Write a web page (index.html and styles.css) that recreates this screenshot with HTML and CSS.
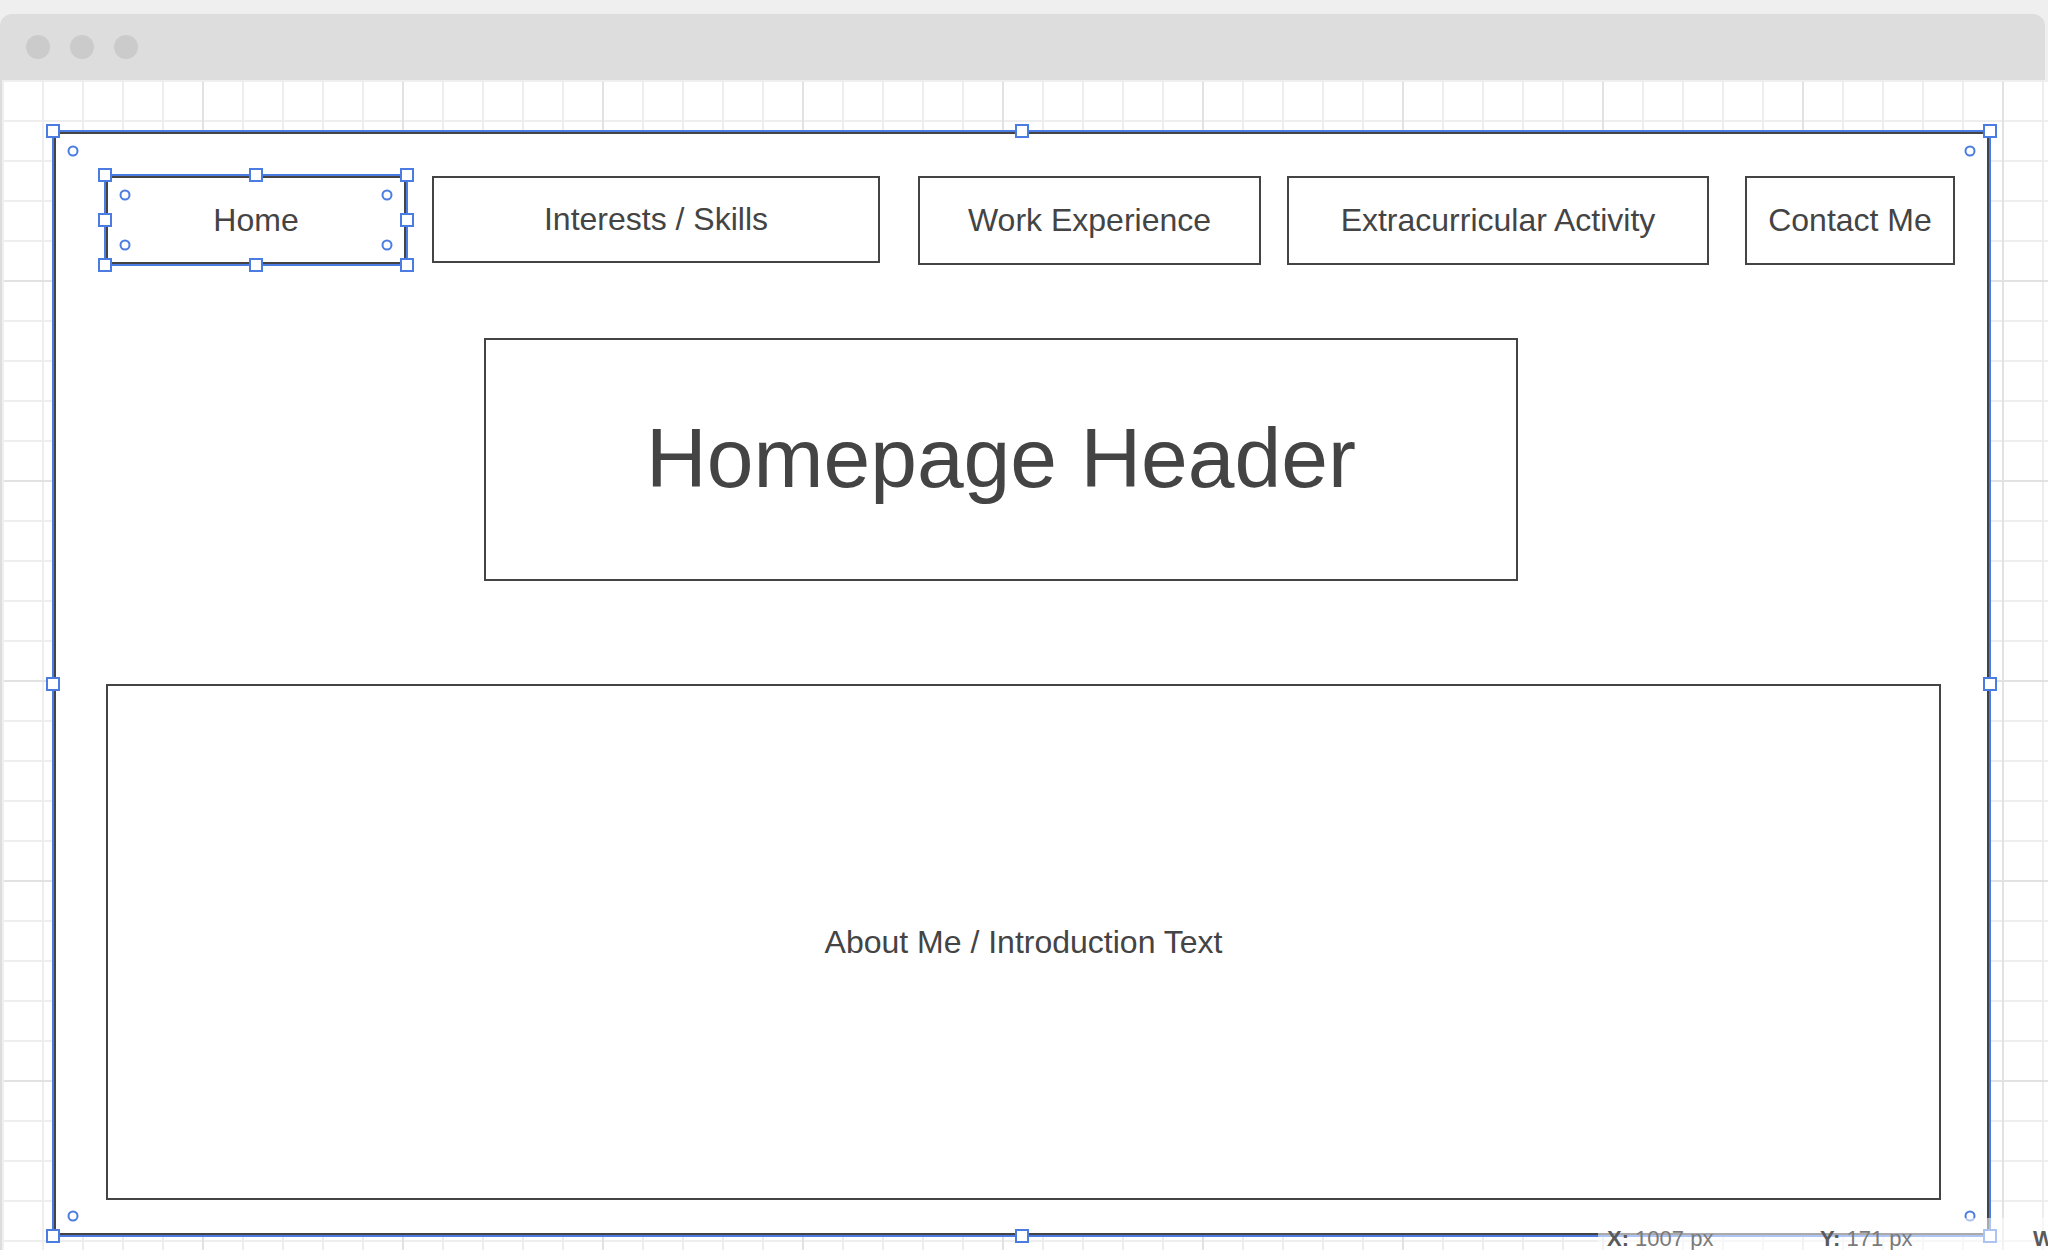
FILE: index.html
```html
<!DOCTYPE html>
<html lang="en">
<head>
<meta charset="utf-8">
<title>Wireframe</title>
<link rel="stylesheet" href="styles.css">
</head>
<body>
<div class="window">
  <div class="titlebar">
    <span class="dot"></span><span class="dot"></span><span class="dot"></span>
  </div>
  <div class="canvas">
    <div class="frame">
      <div class="sel">
        <span class="hd tl"></span><span class="hd tm"></span><span class="hd tr"></span>
        <span class="hd ml"></span><span class="hd mr"></span>
        <span class="hd bl"></span><span class="hd bm"></span><span class="hd br"></span>
        <span class="rc c-tl"></span><span class="rc c-tr"></span><span class="rc c-bl"></span><span class="rc c-br"></span>
      </div>
      <nav class="nav">
        <div class="navbox nb-home selected">Home
          <div class="sel">
            <span class="hd tl"></span><span class="hd tm"></span><span class="hd tr"></span>
            <span class="hd ml"></span><span class="hd mr"></span>
            <span class="hd bl"></span><span class="hd bm"></span><span class="hd br"></span>
            <span class="rc c-tl"></span><span class="rc c-tr"></span><span class="rc c-bl"></span><span class="rc c-br"></span>
          </div>
        </div>
        <div class="navbox nb-interests">Interests / Skills</div>
        <div class="navbox nb-work">Work Experience</div>
        <div class="navbox nb-extra">Extracurricular Activity</div>
        <div class="navbox nb-contact">Contact Me</div>
      </nav>
      <div class="header-box">Homepage Header</div>
      <div class="about-box">About Me / Introduction Text</div>
    </div>
  </div>
  <div class="status">
    <span class="stat"><b>X:</b> 1007 px</span>
    <span class="stat"><b>Y:</b> 171 px</span>
    <span class="stat"><b>W</b></span>
  </div>
</div>
</body>
</html>
```
FILE: styles.css
```css
* { box-sizing: border-box; }

html, body {
  margin: 0;
  padding: 0;
  height: 1250px;
  overflow: hidden;
  background: #efefef;
  font-family: "Liberation Sans", Arial, sans-serif;
}

.window {
  padding-top: 14px;
}

.titlebar {
  height: 66px;
  margin-right: 3px;
  background: #dddddd;
  border-radius: 12px 12px 0 0;
  display: flex;
  align-items: center;
  gap: 20px;
  padding-left: 26px;
}

.dot {
  width: 24px;
  height: 24px;
  border-radius: 50%;
  background: #cbcbcb;
}

.canvas {
  height: 1170px;
  border-left: 2px solid #dddddd;
  padding: 2px 0 0 2px;
  background-color: #ffffff;
  background-image:
    linear-gradient(to right, #e2e2e2 2px, transparent 2px),
    linear-gradient(to bottom, #e2e2e2 2px, transparent 2px),
    linear-gradient(to right, #eeeeee 2px, transparent 2px),
    linear-gradient(to bottom, #eeeeee 2px, transparent 2px);
  background-size: 200px 200px, 200px 200px, 40px 40px, 40px 40px;
  background-position: 0 0, 0 0, 0 0, 0 0;
  background-clip: content-box;
  overflow: hidden;
}

.frame {
  position: relative;
  width: 1935px;
  height: 1103px;
  margin: 50px 0 0 50px;
  background: #ffffff;
  border: 2px solid #444444;
  outline: 2px solid #4a7ce2;
}

/* selection overlay */
.sel {
  position: absolute;
  inset: -3px;
  pointer-events: none;
}

.hd {
  position: absolute;
  width: 14px;
  height: 14px;
  background: #ffffff;
  border: 2px solid #4a7ce2;
  transform: translate(-50%, -50%);
}
.tl { left: 0; top: 0; }
.tm { left: 50%; top: 0; }
.tr { left: 100%; top: 0; }
.ml { left: 0; top: 50%; }
.mr { left: 100%; top: 50%; }
.bl { left: 0; top: 100%; }
.bm { left: 50%; top: 100%; }
.br { left: 100%; top: 100%; }

.rc {
  position: absolute;
  width: 11px;
  height: 11px;
  border-radius: 50%;
  background: #ffffff;
  border: 2px solid #4a7ce2;
  transform: translate(-50%, -50%);
}
.c-tl { left: 20px; top: 20px; }
.c-tr { left: calc(100% - 20px); top: 20px; }
.c-bl { left: 20px; top: calc(100% - 20px); }
.c-br { left: calc(100% - 20px); top: calc(100% - 20px); }

/* nav */
.nav {
  display: flex;
  align-items: flex-start;
  margin-top: 42px;
  padding-left: 50px;
}

.navbox {
  position: relative;
  display: flex;
  align-items: center;
  justify-content: center;
  border: 2px solid #444444;
  color: #444444;
  font-size: 32px;
  height: 89px;
  white-space: nowrap;
}

.nb-home { width: 300px; height: 88px; margin-right: 26px; }
.nb-interests { width: 448px; height: 87px; margin-right: 38px; }
.nb-work { width: 343px; margin-right: 26px; }
.nb-extra { width: 422px; margin-right: 36px; }
.nb-contact { width: 210px; }

.selected {
  outline: 2px solid #4a7ce2;
}

.header-box {
  width: 1034px;
  height: 243px;
  margin: 73px 0 0 428px;
  border: 2px solid #444444;
  display: flex;
  align-items: center;
  justify-content: center;
  color: #444444;
  font-size: 84px;
  padding-bottom: 2px;
}

.about-box {
  width: 1835px;
  height: 516px;
  margin: 103px 0 0 50px;
  border: 2px solid #444444;
  display: flex;
  align-items: center;
  justify-content: center;
  color: #444444;
  font-size: 32px;
}

/* status overlay */
.status {
  position: absolute;
  left: 1598px;
  top: 1218px;
  right: 0;
  bottom: 0;
  background: rgba(255, 255, 255, 0.55);
  display: flex;
  align-items: flex-start;
  padding: 8px 0 0 9px;
  font-size: 22px;
  color: #7a7a7a;
  white-space: nowrap;
  overflow: hidden;
}

.stat {
  width: 213px;
  flex: none;
}

.stat b {
  color: #5a5a5a;
  font-weight: bold;
}
```
